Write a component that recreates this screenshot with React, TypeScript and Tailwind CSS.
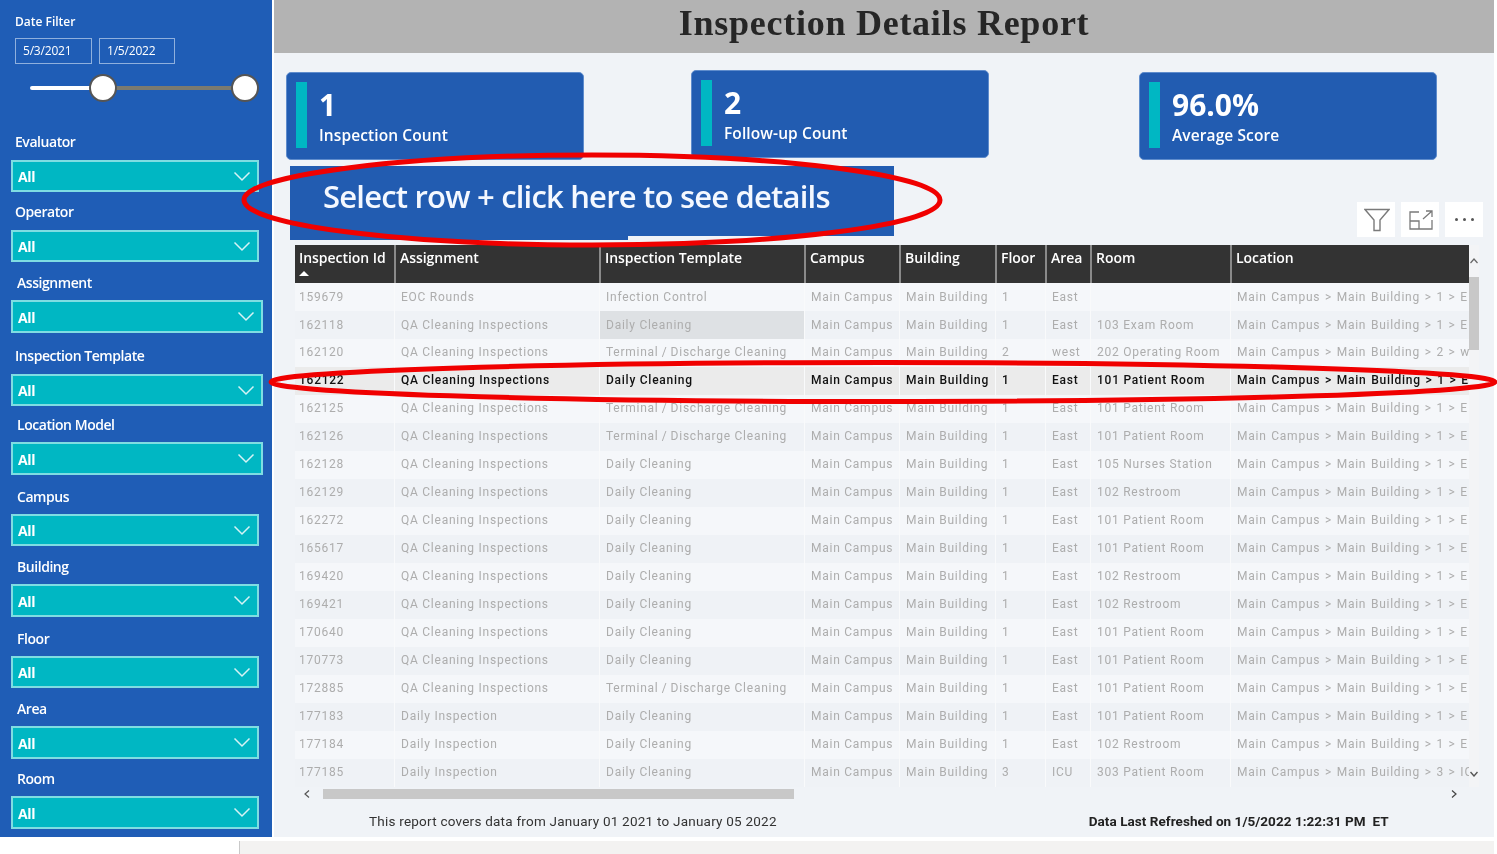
import React from "react";

const filters = [
  { name: "Evaluator", wrap: "mt-[30px] pl-[4px]", gap: "mt-[9px]", dd: "h-[32px] w-[248px]" },
  { name: "Operator", wrap: "mt-[11px] pl-[4px]", gap: "mt-[9px]", dd: "h-[32px] w-[248px]" },
  { name: "Assignment", wrap: "mt-[12px] pl-[6px]", gap: "mt-[8px]", dd: "h-[33px] w-[252px]" },
  { name: "Inspection Template", wrap: "mt-[14px] pl-[4px]", gap: "mt-[9px]", dd: "h-[32px] w-[252px]" },
  { name: "Location Model", wrap: "mt-[10px] pl-[6px]", gap: "mt-[8px]", dd: "h-[33px] w-[252px]" },
  { name: "Campus", wrap: "mt-[13px] pl-[6px]", gap: "mt-[8px]", dd: "h-[32px] w-[248px]" },
  { name: "Building", wrap: "mt-[12px] pl-[6px]", gap: "mt-[8px]", dd: "h-[33px] w-[248px]" },
  { name: "Floor", wrap: "mt-[13px] pl-[6px]", gap: "mt-[8px]", dd: "h-[32px] w-[248px]" },
  { name: "Area", wrap: "mt-[12px] pl-[6px]", gap: "mt-[8px]", dd: "h-[33px] w-[248px]" },
  { name: "Room", wrap: "mt-[11px] pl-[6px]", gap: "mt-[8px]", dd: "h-[33px] w-[248px]" },
];

const QA = "QA Cleaning Inspections";
const DI = "Daily Inspection";
const DC = "Daily Cleaning";
const TC = "Terminal\u2009/\u2009Discharge Cleaning";
const P = "101 Patient Room";
const R = "102 Restroom";
const L1 = "Main Campus > Main Building > 1 > E";

const rows: string[][] = [
  ["159679", "EOC Rounds", "Infection Control", "1", "East", "", L1],
  ["162118", QA, DC, "1", "East", "103 Exam Room", L1],
  ["162120", QA, TC, "2", "west", "202 Operating Room", "Main Campus > Main Building > 2 > w"],
  ["162122", QA, DC, "1", "East", P, L1],
  ["162125", QA, TC, "1", "East", P, L1],
  ["162126", QA, TC, "1", "East", P, L1],
  ["162128", QA, DC, "1", "East", "105 Nurses Station", L1],
  ["162129", QA, DC, "1", "East", R, L1],
  ["162272", QA, DC, "1", "East", P, L1],
  ["165617", QA, DC, "1", "East", P, L1],
  ["169420", QA, DC, "1", "East", R, L1],
  ["169421", QA, DC, "1", "East", R, L1],
  ["170640", QA, DC, "1", "East", P, L1],
  ["170773", QA, DC, "1", "East", P, L1],
  ["172885", QA, TC, "1", "East", P, L1],
  ["177183", DI, DC, "1", "East", P, L1],
  ["177184", DI, DC, "1", "East", R, L1],
  ["177185", DI, DC, "3", "ICU", "303 Patient Room", "Main Campus > Main Building > 3 > IC"],
];

const cols = "grid grid-cols-[99px_205px_205px_95px_96px_50px_45px_140px_239px]";
const heads = ["Inspection Id", "Assignment", "Inspection Template", "Campus", "Building", "Floor", "Area", "Room", "Location"];

function Chevron() {
  return (
    <svg width="18" height="11" viewBox="0 0 18 11" fill="none" stroke="#d6f3f5" strokeWidth="1.5">
      <path d="M1.5 1.5 L9 9 L16.5 1.5" />
    </svg>
  );
}

function Card({ value, label, cls }: { value: string; label: string; cls: string }) {
  return (
    <div className={`flex h-[88px] w-[298px] rounded-[5px] border border-[#5f8ccc] bg-[#225cb1] pl-[9px] pt-[9px] ${cls}`}>
      <div className="h-[66px] w-[11px] bg-[#00b7c3]" />
      <div className="ml-[12px] flex flex-col text-white">
        <div className="mt-[1px] h-[44px] font-['Open_Sans',sans-serif] text-[30px] leading-[44px] font-bold">{value}</div>
        <div className="-mt-[2px] font-['Open_Sans',sans-serif] text-[15.5px] leading-[20px] font-semibold tracking-[0.1px]">{label}</div>
      </div>
    </div>
  );
}

export default function App() {
  return (
    <div className="relative h-[854px] w-[1497px] overflow-hidden bg-white blur-[0.4px]">
      <div className="flex h-[837px] w-[1494px]">
        <aside className="h-full w-[272px] shrink-0 bg-[#1f5db6] pl-[11px] font-['Open_Sans',sans-serif] text-white">
          <div className="pl-[4px] pt-[14px] text-[12px] leading-[16px] font-semibold">Date Filter</div>
          <div className="mt-[8px] flex gap-[7px] pl-[4px]">
            <div className="flex h-[26px] w-[77px] items-center border border-[#8fb0dd] pl-[7px] text-[12px] tracking-[-0.2px]">5/3/2021</div>
            <div className="flex h-[26px] w-[76px] items-center border border-[#8fb0dd] pl-[7px] text-[12px] tracking-[-0.2px]">1/5/2022</div>
          </div>
          <div className="relative ml-[19px] mt-[9px] h-[30px] w-[215px]">
            <div className="absolute left-0 top-[13px] h-[4px] w-[73px] rounded-l-full bg-white" />
            <div className="absolute left-[73px] top-[13px] h-[4px] w-[142px] bg-[#7a7a70]" />
            <div className="absolute left-[59px] top-[1px] h-[28px] w-[28px] rounded-full border-2 border-[#555] bg-white" />
            <div className="absolute left-[201px] top-[1px] h-[28px] w-[28px] rounded-full border-2 border-[#555] bg-white" />
          </div>
          {filters.map((f) => (
            <div key={f.name}>
              <div className={`h-[18px] text-[14px] leading-[18px] font-semibold tracking-[-0.45px] ${f.wrap}`}>{f.name}</div>
              <div className={`flex items-center justify-between border-2 border-[#7fdde2] bg-[#00b7c3] pl-[5px] pr-[6px] ${f.gap} ${f.dd}`}>
                <span className="mt-[1px] text-[14px] font-bold tracking-[-0.4px]">All</span>
                <Chevron />
              </div>
            </div>
          ))}
        </aside>

        <main className="ml-[2px] flex min-w-0 flex-1 flex-col bg-[#f0f3f7]">
          <div className="flex h-[53px] items-center justify-center bg-[#b3b3b3] pb-[7px]">
            <h1 className="font-['Liberation_Serif',serif] text-[36px] font-bold tracking-[0.75px] text-[#262626]">Inspection Details Report</h1>
          </div>

          <div className="flex h-[113px] items-start pl-[12px] pt-[17px]">
            <Card value="1" label="Inspection Count" cls="mt-[2px]" />
            <Card value="2" label="Follow-up Count" cls="ml-[107px]" />
            <Card value="96.0%" label="Average Score" cls="ml-[150px] mt-[2px]" />
          </div>

          <div className="flex h-[79px] items-start">
            <div className="ml-[16px] w-[604px]">
              <div className="flex h-[70px] items-center bg-[#225cb1] pb-[10px] pl-[33px] font-['Open_Sans',sans-serif] text-[31px] font-semibold tracking-[-0.8px] text-[#f4f8ff]">
                Select row + click here to see details
              </div>
              <div className="h-[4px] w-[338px] bg-[#225cb1]" />
            </div>
            <div className="ml-auto mr-[11px] mt-[36px] flex gap-[6px]">
              <div className="flex h-[35px] w-[38px] items-center justify-center bg-white pl-[1px] pt-[1px]">
                <svg width="26" height="24" viewBox="0 0 26 24" fill="none" stroke="#7a7a7a" strokeWidth="1.4"><path d="M1 1.5 H25 L16 12 V22.5 H10 V12 Z" /></svg>
              </div>
              <div className="flex h-[35px] w-[38px] items-center justify-center bg-white pl-[1px] pt-[1px]">
                <svg width="24" height="20" viewBox="0 0 24 20" fill="none" stroke="#7a7a7a" strokeWidth="1.3"><path d="M10 2 H1 V19 H23 V10" /><path d="M1 11 H10 V19" /><path d="M14 9 L23 1 M17 1 H23 V7" /></svg>
              </div>
              <div className="flex h-[35px] w-[38px] items-center justify-center gap-[5px] bg-white">
                <i className="h-[3px] w-[3px] rounded-full bg-[#555]" />
                <i className="h-[3px] w-[3px] rounded-full bg-[#555]" />
                <i className="h-[3px] w-[3px] rounded-full bg-[#555]" />
              </div>
            </div>
          </div>

          <div className="ml-[21px] flex w-[1184px]">
            <div className="w-[1174px]">
              <div className={`${cols} h-[38px] bg-[#333333] font-['Open_Sans',sans-serif] text-[14px] leading-[26px] font-semibold tracking-[-0.05px] text-white`}>
                {heads.map((h, i) => (
                  <div key={h} className={`relative pl-[4px] ${i > 0 ? "border-l-2 border-[#8a8a8a]" : ""}`}>
                    {h}
                    {i === 0 && (
                      <svg className="absolute left-[4px] top-[26px]" width="10" height="6" viewBox="0 0 10 6" fill="#fff"><path d="M5 0 L10 5 H0 Z" /></svg>
                    )}
                  </div>
                ))}
              </div>
              {rows.map((r, i) => {
                const sel = r[0] === "162122";
                const cells = [r[0], r[1], r[2], "Main Campus", "Main Building", r[3], r[4], r[5], r[6]];
                return (
                  <div
                    key={r[0]}
                    className={`${cols} h-[28px] font-['Roboto',sans-serif] text-[12px] tracking-[0.75px] ${i < 2 ? "leading-[28px]" : "leading-[27px]"} ${
                      sel ? "bg-[#ebebeb] font-medium text-[#111]" : i % 2 === 0 ? "bg-[#f5f7fa] text-[#adadad]" : "bg-[#eff2f6] text-[#adadad]"
                    }`}
                  >
                    {cells.map((c, j) => (
                      <div
                        key={j}
                        className={`overflow-hidden whitespace-nowrap ${j === 0 ? "pl-[4px]" : "border-l border-[#f9fafb] pl-[6px]"} ${j === 8 ? "[word-spacing:1px]" : ""} ${i === 1 && j === 2 ? "bg-[#dee1e4]" : ""}`}
                      >
                        {c}
                      </div>
                    ))}
                  </div>
                );
              })}
            </div>
            <div className="flex w-[10px] flex-col items-center bg-[#f3f4f6]">
              <div className="flex h-[32px] items-center">
                <svg width="8" height="6" viewBox="0 0 8 6" fill="none" stroke="#666" strokeWidth="1.2"><path d="M0.5 5 L4 1 L7.5 5" /></svg>
              </div>
              <div className="h-[73px] w-full bg-[#c8c8c8]" />
              <div className="flex-1" />
              <div className="flex h-[24px] items-center pb-[2px]">
                <svg width="8" height="6" viewBox="0 0 8 6" fill="none" stroke="#555" strokeWidth="1.4"><path d="M0.5 1 L4 5 L7.5 1" /></svg>
              </div>
            </div>
          </div>

          <div className="ml-[21px] mt-[2px] flex h-[10px] w-[1174px] items-center">
            <svg className="ml-[9px]" width="6" height="8" viewBox="0 0 6 8" fill="none" stroke="#555" strokeWidth="1.2"><path d="M5 0.5 L1 4 L5 7.5" /></svg>
            <div className="ml-[13px] h-[10px] w-[471px] bg-[#c8c8c8]" />
            <svg className="ml-[657px]" width="6" height="8" viewBox="0 0 6 8" fill="none" stroke="#444" strokeWidth="1.2"><path d="M1 0.5 L5 4 L1 7.5" /></svg>
          </div>

          <div className="flex flex-1 items-center pt-[6px] font-['Roboto',sans-serif] text-[13.5px] text-[#333]">
            <span className="ml-[95px] tracking-[0.23px]">This report covers data from January 01 2021 to January 05 2022</span>
            <span className="ml-[312px] font-bold tracking-[0.05px] text-[#222]">Data Last Refreshed on 1/5/2022 1:22:31 PM&nbsp; ET</span>
          </div>
        </main>
      </div>
      <div className="ml-[239px] mt-[4px] h-[13px] w-[1255px] border-l border-[#c9c9c9] bg-[#f3f2f1]" />

      <svg className="pointer-events-none absolute left-0 top-0" width="1497" height="854" fill="none" stroke="#f00000">
        <ellipse cx="592" cy="200" rx="348" ry="45" strokeWidth="5" />
        <ellipse cx="883" cy="382" rx="612" ry="19.5" strokeWidth="5" />
      </svg>
    </div>
  );
}
